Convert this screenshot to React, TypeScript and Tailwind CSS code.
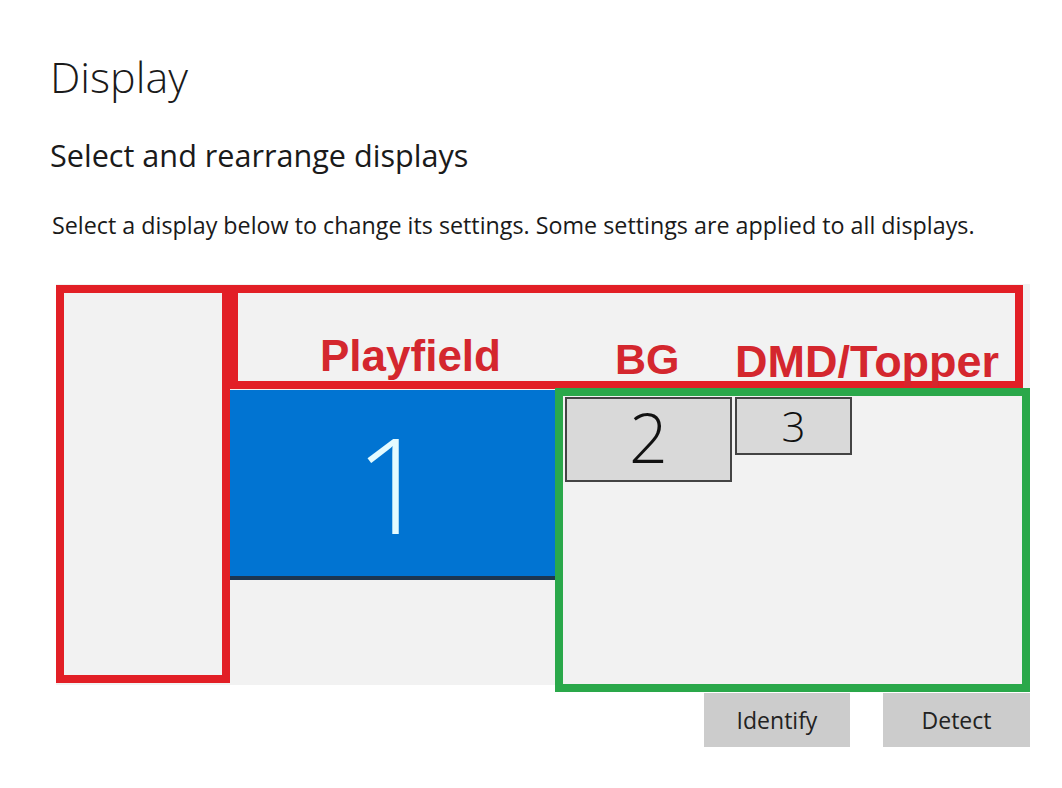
import React from "react";

export default function App() {
  return (
    <div className="w-[1062px] h-[788px] bg-white overflow-hidden" style={{ fontFamily: '"Open Sans", "Noto Sans", sans-serif' }}>
      <div className="pl-[50px] pt-[47px]">
        <h1 className="text-[43px] font-light leading-[60px] text-[#1a1a1a]">Display</h1>
        <h2 className="mt-[28px] text-[30.6px] font-normal leading-[40px] text-[#1a1a1a]">Select and rearrange displays</h2>
        <p className="mt-[34px] pl-[2px] text-[23.3px] leading-[32px] text-[#1a1a1a]">
          Select a display below to change its settings. Some settings are applied to all displays.
        </p>
      </div>

      <div className="relative ml-[56px] mt-[43px] w-[974px] h-[401px] bg-[#f2f2f2]">
        {/* red left */}
        <div className="absolute left-0 top-[1px] w-[174px] h-[398px] border-[8px] border-[#e21f26]" />
        {/* red top */}
        <div className="absolute left-[174px] top-[1px] w-[793px] h-[104px] border-[8px] border-[#e21f26]" />
        {/* display 1 */}
        <div className="absolute left-[174px] top-[106px] w-[325px] h-[190px] bg-[#0174d2] border-b-[4px] border-[#1d3650] flex items-center justify-center">
          <span className="text-[132px] font-light leading-none text-[#e4fbff]">1</span>
        </div>
        {/* green */}
        <div className="absolute left-[499px] top-[104px] w-[475px] h-[304px] border-[8px] border-[#2aa84a]" />
        {/* display 2 */}
        <div className="absolute left-[509px] top-[113px] w-[167px] h-[85px] bg-[#d9d9d9] border-2 border-[#444444] flex items-center justify-center pb-[6px]">
          <span className="text-[68px] font-light leading-none text-[#111111]">2</span>
        </div>
        {/* display 3 */}
        <div className="absolute left-[679px] top-[113px] w-[117px] h-[58px] bg-[#d9d9d9] border-2 border-[#444444] flex items-center justify-center">
          <span className="text-[42px] font-light leading-none text-[#111111]">3</span>
        </div>
        {/* labels */}
        <span className="absolute left-[264px] top-[50px] text-[44px] font-bold leading-none text-[#d4272e]" style={{ fontFamily: '"Liberation Sans", Arial, sans-serif' }}>Playfield</span>
        <span className="absolute left-[559px] top-[54px] text-[43px] font-bold leading-none text-[#d4272e]" style={{ fontFamily: '"Liberation Sans", Arial, sans-serif' }}>BG</span>
        <span className="absolute left-[679px] top-[55px] text-[45px] font-bold leading-none text-[#d4272e]" style={{ fontFamily: '"Liberation Sans", Arial, sans-serif' }}>DMD/Topper</span>
      </div>

      <div className="flex justify-end gap-[33px] w-[1030px] mt-[8px]">
        <button className="w-[146px] h-[54px] bg-[#cccccc] text-[23px] text-[#222222]">Identify</button>
        <button className="w-[147px] h-[54px] bg-[#cccccc] text-[23px] text-[#222222]">Detect</button>
      </div>
    </div>
  );
}
